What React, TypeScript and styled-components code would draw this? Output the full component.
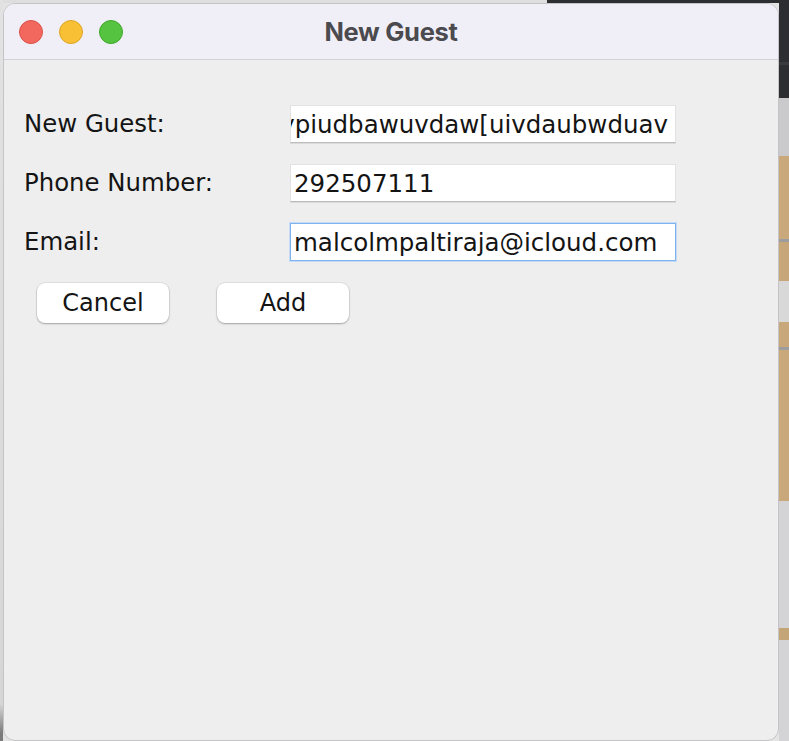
import React, { FC } from 'react'
import styled, { createGlobalStyle } from 'styled-components'

const GlobalStyle = createGlobalStyle`
  html, body {
    margin: 0;
    padding: 0;
    background: #e4e4e4;
  }
  * {
    box-sizing: border-box;
  }
`

const Screen = styled.div`
  display: flex;
  width: 789px;
  height: 741px;
  overflow: hidden;
  background: #e4e4e4;
`

const LeftGutter = styled.div`
  width: 3px;
  flex: none;
  background: linear-gradient(to bottom, #e2e2e2 0, #d6d6d6 95%, #7a7a7a 99%);
`

const CenterColumn = styled.div`
  width: 776px;
  flex: none;
  display: flex;
  flex-direction: column;
`

const TopStrip = styled.div`
  height: 3px;
  flex: none;
  display: flex;
`

const TopSegment = styled.div<{ $dark?: boolean; $width?: number }>`
  height: 100%;
  flex: ${(p) => (p.$width ? `0 0 ${p.$width}px` : '1')};
  background: ${(p) => (p.$dark ? '#2d2e32' : '#dedede')};
`

const RightStrip = styled.div`
  width: 10px;
  flex: none;
  display: flex;
  flex-direction: column;
  box-shadow: inset 3px 0 3px -2px rgba(0, 0, 0, 0.25);
`

const Band = styled.div<{ $h: number; $bg: string }>`
  height: ${(p) => p.$h}px;
  flex: none;
  background: ${(p) => p.$bg};
`

const Window = styled.div`
  flex: 1;
  display: flex;
  flex-direction: column;
  border: 1px solid #c4c4c6;
  border-radius: 12px;
  overflow: hidden;
  background: #eeeeee;
`

const TitleBar = styled.div`
  height: 56px;
  flex: none;
  display: grid;
  grid-template-columns: 1fr auto 1fr;
  align-items: center;
  background: #f0eef7;
  border-bottom: 1px solid #d3d1d8;
`

const Lights = styled.div`
  display: flex;
  gap: 16px;
  padding-left: 15px;
`

const Light = styled.span<{ $fill: string; $edge: string }>`
  width: 24px;
  height: 24px;
  border-radius: 50%;
  background: ${(p) => p.$fill};
  border: 1px solid ${(p) => p.$edge};
`

const Title = styled.div`
  font-family: Inter, 'Liberation Sans', sans-serif;
  font-weight: 700;
  font-size: 25.5px;
  color: #4b4a4e;
  letter-spacing: -0.3px;
`

const Body = styled.div`
  flex: 1;
  padding: 45px 0 0 20px;
  font-family: 'DejaVu Sans', Verdana, sans-serif;
  color: #141414;
`

const FormGrid = styled.div`
  display: grid;
  grid-template-columns: 266px 386px;
  grid-auto-rows: 38px;
  row-gap: 21px;
  align-items: center;
`

const Label = styled.div`
  font-size: 24.4px;
  line-height: 1;
`

const Field = styled.div<{ $focused?: boolean; $scrolled?: boolean }>`
  height: 38px;
  display: flex;
  align-items: center;
  justify-content: ${(p) => (p.$scrolled ? 'flex-end' : 'flex-start')};
  padding: 0 7px 0 3px;
  background: #ffffff;
  overflow: hidden;
  white-space: nowrap;
  font-size: 24.5px;
  border: 1px solid ${(p) => (p.$focused ? '#80b3ee' : '#e2e2e2')};
  border-bottom-color: ${(p) => (p.$focused ? '#80b3ee' : '#bcbcbc')};
  box-shadow: ${(p) =>
    p.$focused ? '0 0 0 1px #c3dbf8' : '0 1px 0 rgba(0, 0, 0, 0.08)'};
`

const ButtonRow = styled.div`
  display: flex;
  gap: 48px;
  margin-top: 22px;
  padding-left: 13px;
`

const Button = styled.button`
  width: 132px;
  height: 40px;
  border: none;
  border-radius: 8px;
  background: #ffffff;
  box-shadow: 0 0 0 0.5px rgba(0, 0, 0, 0.12), 0 1px 2px rgba(0, 0, 0, 0.28);
  font-family: 'DejaVu Sans', Verdana, sans-serif;
  font-size: 24px;
  color: #141414;
  padding: 0;
`

const bands: { h: number; bg: string }[] = [
  { h: 62, bg: '#2d2e32' },
  { h: 3, bg: '#3a3b3f' },
  { h: 33, bg: '#2d2e32' },
  { h: 58, bg: '#cacacd' },
  { h: 83, bg: '#c9a97c' },
  { h: 3, bg: '#9d9d9f' },
  { h: 39, bg: '#c7a679' },
  { h: 41, bg: '#d8d8d8' },
  { h: 25, bg: '#c8a87b' },
  { h: 3, bg: '#9d9d9f' },
  { h: 151, bg: '#c9a97c' },
  { h: 127, bg: '#d4d4d6' },
  { h: 12, bg: '#c4a577' },
  { h: 101, bg: '#d4d4d6' },
]

const App: FC = () => {
  return (
    <>
      <GlobalStyle />
      <Screen>
        <LeftGutter />
        <CenterColumn>
          <TopStrip>
            <TopSegment $width={544} />
            <TopSegment $dark />
          </TopStrip>
          <Window>
            <TitleBar>
              <Lights>
                <Light $fill="#f2685e" $edge="#dc5248" />
                <Light $fill="#f8c135" $edge="#dea427" />
                <Light $fill="#55c33f" $edge="#40a82d" />
              </Lights>
              <Title>New Guest</Title>
              <div />
            </TitleBar>
            <Body>
              <FormGrid>
                <Label>New Guest:</Label>
                <Field $scrolled>dwypiudbawuvdaw[uivdaubwduav</Field>
                <Label>Phone Number:</Label>
                <Field>292507111</Field>
                <Label>Email:</Label>
                <Field $focused>malcolmpaltiraja@icloud.com</Field>
              </FormGrid>
              <ButtonRow>
                <Button>Cancel</Button>
                <Button>Add</Button>
              </ButtonRow>
            </Body>
          </Window>
        </CenterColumn>
        <RightStrip>
          {bands.map((b, i) => (
            <Band key={i} $h={b.h} $bg={b.bg} />
          ))}
        </RightStrip>
      </Screen>
    </>
  )
}

export default App
